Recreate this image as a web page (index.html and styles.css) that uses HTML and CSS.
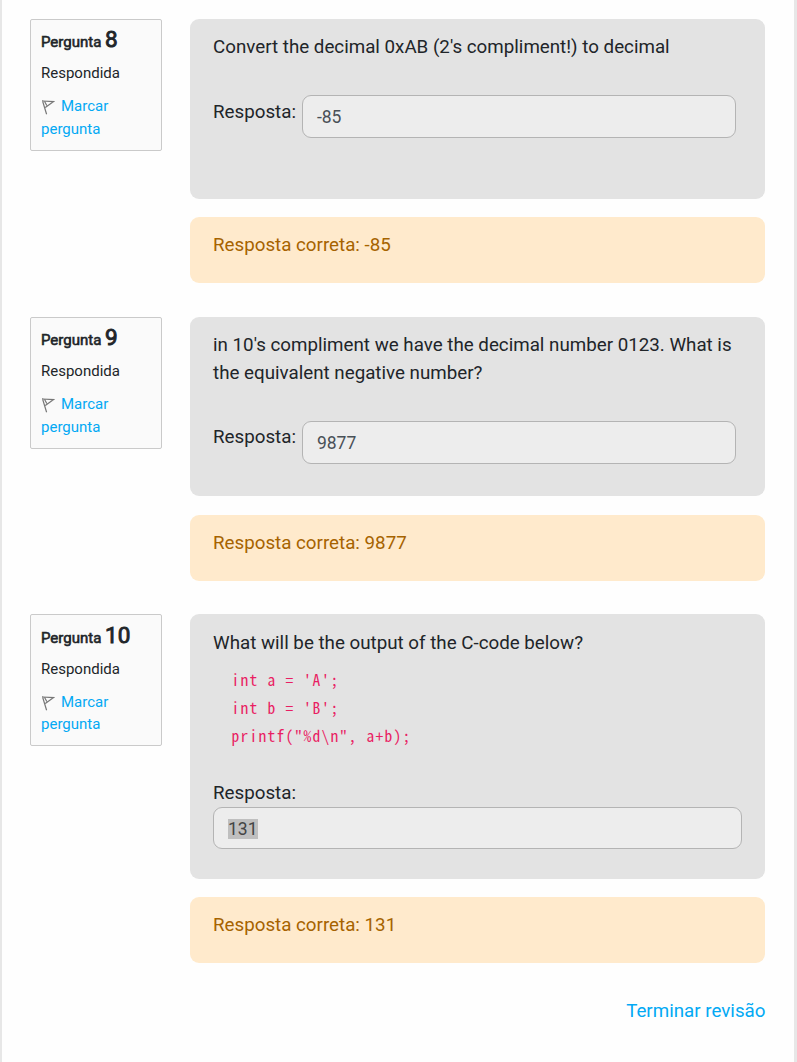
FILE: index.html
```html
<!DOCTYPE html>
<html lang="pt">
<head>
<meta charset="utf-8">
<title>Revisão</title>
<link rel="stylesheet" href="styles.css">
</head>
<body>
<main class="page">
  <section class="question">
    <aside class="info">
      <h3 class="info-title">Pergunta <span class="number">8</span></h3>
      <div class="state">Respondida</div>
      <div class="flag"><svg class="flag-icon" viewBox="0 0 14 16"><path d="M1.5 1.8 5.6 15.2M1 2 12.6 2.6 4.3 8.5M3.6 2.5 5.8 6.5" /></svg><a class="link">Marcar pergunta</a></div>
    </aside>
    <div class="content">
      <div class="formulation tall">
        <p class="text">Convert the decimal 0xAB (2's compliment!) to decimal</p>
        <div class="answer"><label class="label">Resposta:</label><div class="field">-85</div></div>
      </div>
      <div class="outcome">Resposta correta: -85</div>
    </div>
  </section>
  <section class="question">
    <aside class="info">
      <h3 class="info-title">Pergunta <span class="number">9</span></h3>
      <div class="state">Respondida</div>
      <div class="flag"><svg class="flag-icon" viewBox="0 0 14 16"><path d="M1.5 1.8 5.6 15.2M1 2 12.6 2.6 4.3 8.5M3.6 2.5 5.8 6.5" /></svg><a class="link">Marcar pergunta</a></div>
    </aside>
    <div class="content">
      <div class="formulation medium">
        <p class="text">in 10's compliment we have the decimal number 0123. What is the equivalent negative number?</p>
        <div class="answer"><label class="label">Resposta:</label><div class="field">9877</div></div>
      </div>
      <div class="outcome">Resposta correta: 9877</div>
    </div>
  </section>
  <section class="question last">
    <aside class="info">
      <h3 class="info-title">Pergunta <span class="number">10</span></h3>
      <div class="state">Respondida</div>
      <div class="flag"><svg class="flag-icon" viewBox="0 0 14 16"><path d="M1.5 1.8 5.6 15.2M1 2 12.6 2.6 4.3 8.5M3.6 2.5 5.8 6.5" /></svg><a class="link">Marcar pergunta</a></div>
    </aside>
    <div class="content">
      <div class="formulation large">
        <p class="text">What will be the output of the C-code below?</p>
        <pre class="code">int a = 'A';
int b = 'B';
printf("%d\n", a+b);</pre>
        <div class="answer stacked"><label class="label">Resposta:</label><div class="field"><span class="selected">131</span></div></div>
      </div>
      <div class="outcome">Resposta correta: 131</div>
    </div>
  </section>
  <div class="finish"><a class="link">Terminar revisão</a></div>
</main>
</body>
</html>
```

FILE: styles.css
```css
* { box-sizing: border-box; }
body {
  margin: 0;
  background: #fefefe;
  color: #212529;
  font: 18.75px/28px Roboto, sans-serif;
}
.page {
  height: 1062px;
  padding: 19px 29px 0 28px;
  border-left: 2px solid #e7e7e7;
  border-right: 3px solid #e7e7e7;
  overflow: hidden;
}
.question {
  display: flex;
  align-items: flex-start;
  gap: 28px;
  height: 298px;
}
.question + .last { margin-top: -1px; }
.question.last { height: 349px; }
.info {
  width: 132px;
  height: 132px;
  padding: 6px 10px;
  border: 1px solid #cacaca;
  border-radius: 2px;
  background: #fafafa;
  font-size: 15px;
  line-height: 22.5px;
}
.last .info { padding-top: 7px; }
.info-title {
  margin: 0;
  font-size: 15px;
  font-weight: 400;
  line-height: 27px;
  white-space: nowrap;
  -webkit-text-stroke: 0.6px #212529;
}
.number { font-size: 22.5px; -webkit-text-stroke-width: 0.9px; }
.state { margin-top: 6px; }
.flag { margin-top: 10px; line-height: 23px; }
.last .flag { line-height: 22px; }
.flag-icon {
  width: 14px;
  height: 16px;
  margin-right: 6px;
  vertical-align: -4px;
  fill: none;
  stroke: #777;
  stroke-width: 1.2;
}
.link { color: #03a9f4; }
.content { flex: 1; min-width: 0; }
.formulation {
  padding: 14px 23px 0;
  border-radius: 9px;
  background: #e3e3e3;
}
.tall { height: 180px; }
.medium { height: 179px; }
.medium + .outcome { margin-top: 19px; }
.large { height: 265px; padding-top: 15px; }
.text { margin: 0; }
.answer {
  display: flex;
  align-items: flex-start;
  gap: 6px;
  margin-top: 34px;
}
.label { padding-top: 3px; }
.medium .label { padding-top: 2px; }
.field {
  width: 434px;
  height: 43px;
  padding: 7px 14px;
  border: 1px solid #b4b4b4;
  border-radius: 9px;
  background: #ededed;
  color: #495057;
  font-size: 17.5px;
}
.stacked {
  flex-direction: column;
  gap: 0;
  margin-top: 27px;
}
.stacked .field { width: 529px; height: 42px; }
.selected { background: #bfbfbf; color: #444; }
.code {
  margin: 8px 0 0 18.5px;
  color: #e91e63;
  font: 15.5px/28px "Noto Sans Mono CJK JP", monospace;
  letter-spacing: 1.25px;
}
.outcome {
  height: 66px;
  margin-top: 18px;
  padding: 14px 23px;
  border-radius: 9px;
  background: #ffeacc;
  color: #a66300;
}
.finish { margin-top: 34px; margin-right: -0.5px; text-align: right; }
```
